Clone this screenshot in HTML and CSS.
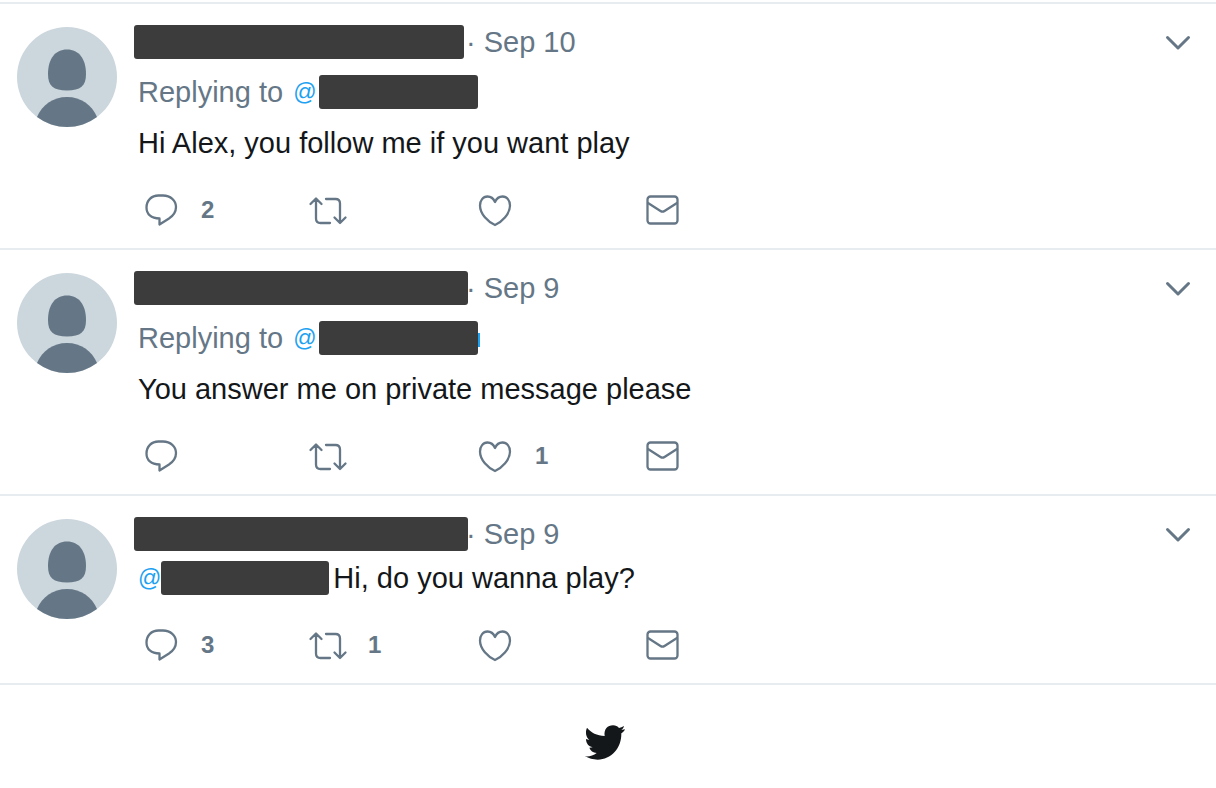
FILE: index.html
```html
<!DOCTYPE html>
<html lang="en">
<head>
    <meta charset="UTF-8">
    <meta name="viewport" content="width=device-width, initial-scale=1.0">
    <title>Replies</title>
    <link rel="stylesheet" href="styles.css">
</head>
<body>
    <!-- Shared icon shapes -->
    <svg class="sprite" aria-hidden="true">
        <symbol id="avatar" viewBox="0 0 100 100">
            <circle cx="50" cy="50" r="50" fill="#ccd6dd"/>
            <path d="M50 22.500C62 22.500 69 32 69 47C69 59 63.500 63.500 50 63.500C36.500 63.500 31 59 31 47C31 32 38 22.500 50 22.500Z" fill="#657786"/>
            <path d="M20 90C25 78 36 70 50 70C64 70 75 78 80 90A50 50 0 0 1 20 90Z" fill="#657786"/>
        </symbol>
        <symbol id="reply" viewBox="0 0 40 40">
            <path d="M17.500 5.500H22C29.500 5.500 35 10.500 35 17C35 22 32.500 25.500 28 28.500L18.500 34.500V28.500C10 28.500 5.500 24 5.500 17.500C5.500 10.500 10.500 5.500 17.500 5.500Z"/>
        </symbol>
        <symbol id="retweet" viewBox="0 0 40 40">
            <path d="M2.500 14L8 8.500L13.500 14M8 9V28.500C8 31.500 9.500 33 12.500 33H22M18 9H27.500C30.500 9 32 10.500 32 13.500V32.500M26.500 27.500L32 33L37.500 27.500"/>
        </symbol>
        <symbol id="like" viewBox="0 0 40 40">
            <path d="M20 12C18.500 8.500 15.500 6.500 12.500 6.500C8 6.500 5 10.500 5 15.500C5 24 13 32 20 35C27 32 35 24 35 15.500C35 10.500 32 6.500 27.500 6.500C24.500 6.500 21.500 8.500 20 12Z"/>
        </symbol>
        <symbol id="message" viewBox="0 0 40 40">
            <rect x="5.500" y="6.500" width="30" height="27" rx="3"/>
            <path d="M6 13L18.500 21C20 22 21 22 22.500 21L35 13"/>
        </symbol>
        <symbol id="caret" viewBox="0 0 28 28">
            <path d="M3.500 8.500L14 19L24.500 8.500"/>
        </symbol>
    </svg>

    <main class="stream">
        <article class="tweet">
            <svg class="avatar" role="img" aria-label="Profile picture"><use href="#avatar"/></svg>
            <div class="content">
                <header class="tweet-header">
                    <a class="account" href="#"><span class="redacted name-short"></span></a>
                    <a class="time" href="#">· Sep 10</a>
                    <button class="more" type="button" aria-label="More"><svg class="caret"><use href="#caret"/></svg></button>
                </header>
                <p class="replying">Replying to <a class="mention" href="#"><span class="at">@</span><span class="redacted handle"></span></a></p>
                <p class="tweet-text">Hi Alex, you follow me if you want play</p>
                <div class="actions">
                    <button class="action" type="button" aria-label="Reply"><svg class="icon"><use href="#reply"/></svg><span class="count">2</span></button>
                    <button class="action" type="button" aria-label="Retweet"><svg class="icon"><use href="#retweet"/></svg></button>
                    <button class="action" type="button" aria-label="Like"><svg class="icon"><use href="#like"/></svg></button>
                    <button class="action" type="button" aria-label="Direct message"><svg class="icon"><use href="#message"/></svg></button>
                </div>
            </div>
        </article>

        <article class="tweet">
            <svg class="avatar" role="img" aria-label="Profile picture"><use href="#avatar"/></svg>
            <div class="content">
                <header class="tweet-header">
                    <a class="account" href="#"><span class="redacted name"></span></a>
                    <a class="time" href="#">· Sep 9</a>
                    <button class="more" type="button" aria-label="More"><svg class="caret"><use href="#caret"/></svg></button>
                </header>
                <p class="replying">Replying to <a class="mention" href="#"><span class="at">@</span><span class="redacted handle handle-long"></span></a></p>
                <p class="tweet-text">You answer me on private message please</p>
                <div class="actions">
                    <button class="action" type="button" aria-label="Reply"><svg class="icon"><use href="#reply"/></svg></button>
                    <button class="action" type="button" aria-label="Retweet"><svg class="icon"><use href="#retweet"/></svg></button>
                    <button class="action" type="button" aria-label="Like"><svg class="icon"><use href="#like"/></svg><span class="count">1</span></button>
                    <button class="action" type="button" aria-label="Direct message"><svg class="icon"><use href="#message"/></svg></button>
                </div>
            </div>
        </article>

        <article class="tweet">
            <svg class="avatar" role="img" aria-label="Profile picture"><use href="#avatar"/></svg>
            <div class="content">
                <header class="tweet-header compact">
                    <a class="account" href="#"><span class="redacted name"></span></a>
                    <a class="time" href="#">· Sep 9</a>
                    <button class="more" type="button" aria-label="More"><svg class="caret"><use href="#caret"/></svg></button>
                </header>
                <p class="tweet-text"><a class="mention" href="#"><span class="at">@</span><span class="redacted handle-inline"></span></a>Hi, do you wanna play?</p>
                <div class="actions">
                    <button class="action" type="button" aria-label="Reply"><svg class="icon"><use href="#reply"/></svg><span class="count">3</span></button>
                    <button class="action" type="button" aria-label="Retweet"><svg class="icon"><use href="#retweet"/></svg><span class="count">1</span></button>
                    <button class="action" type="button" aria-label="Like"><svg class="icon"><use href="#like"/></svg></button>
                    <button class="action" type="button" aria-label="Direct message"><svg class="icon"><use href="#message"/></svg></button>
                </div>
            </div>
        </article>
    </main>

    <footer class="stream-footer">
        <svg class="bird" viewBox="0 0 120 105" role="img" aria-label="Twitter">
            <path d="M6 8C18 23 36 32 59 33C56 13 68 1 84 1C92 1 98 4 102 9C107 8 112 6 117 3C116 8 113 12 109 15L120 13C118 18 114 22 109 25C110 70 78 104 38 104C24 104 11 100 0 94C14 95 25 92 35 84C24 83 16 77 13 68L23 67C11 64 3 55 3 42L13 45C3 36 0 21 6 8Z"/>
        </svg>
    </footer>
</body>
</html>
```
FILE: styles.css
```css
* {
    box-sizing: border-box;
}

body {
    margin: 0;
    padding-top: 2px;
    background-color: #ffffff;
    color: #14171a;
    font-family: "Liberation Sans", Arial, sans-serif;
    font-size: 29px;
    line-height: 34px;
}

a {
    color: inherit;
    text-decoration: none;
}

p {
    margin: 0;
}

button {
    padding: 0;
    border: none;
    background: none;
    color: #657786;
    font-family: inherit;
    cursor: pointer;
}

.sprite {
    display: none;
}

.tweet {
    display: flex;
    align-items: flex-start;
    gap: 17px;
    padding: 21px 24px 18px 17px;
    border-top: 2px solid #e6ecf0;
}

.avatar {
    flex: none;
    width: 100px;
    height: 100px;
    margin-top: 2px;
}

.content {
    flex: 1;
    min-width: 0;
}

.tweet-header {
    display: flex;
    margin-bottom: 16px;
    color: #657786;
}

.tweet-header.compact {
    margin-bottom: 10px;
}

.account {
    display: flex;
    width: 332px;
}

/* Blocked-out names */
.redacted {
    display: inline-block;
    flex: none;
    height: 34px;
    border-radius: 3px;
    background-color: #3c3c3c;
    vertical-align: top;
}

.name {
    width: 334px;
}

.name-short {
    width: 330px;
}

.handle {
    position: relative;
    width: 159px;
}

/* Edge of the last letter showing past the block */
.handle-long::after {
    content: "";
    position: absolute;
    top: 12px;
    left: 100%;
    width: 2px;
    height: 14px;
    background-color: #1da1f2;
}

.handle-inline {
    width: 168px;
    margin-right: 4px;
}

.replying,
.tweet-text {
    padding-left: 4px;
}

.replying {
    margin-bottom: 17px;
    color: #657786;
}

.mention {
    color: #1da1f2;
}

.at {
    font-size: 23px;
    vertical-align: 2px;
    line-height: 22px;
}

.replying .at {
    padding: 0 2px;
}

.more {
    width: 28px;
    height: 34px;
    margin-left: auto;
}

.caret {
    display: block;
    width: 28px;
    height: 28px;
    margin: 4px 0;
    fill: none;
    stroke: #657786;
    stroke-width: 3;
    stroke-linecap: round;
    stroke-linejoin: round;
}

.actions {
    display: flex;
    margin-top: 30px;
    padding-left: 7px;
}

.action {
    display: flex;
    align-items: center;
    gap: 20px;
    width: 167px;
    height: 40px;
}

.icon {
    width: 40px;
    height: 40px;
    fill: none;
    stroke: #657786;
    stroke-width: 2.3;
    stroke-linecap: round;
    stroke-linejoin: round;
}

.count {
    font-size: 24px;
    font-weight: bold;
}

.stream-footer {
    display: flex;
    justify-content: center;
    padding: 40px 6px 28px 0;
    border-top: 2px solid #e6ecf0;
}

.bird {
    width: 40px;
    height: 35px;
    fill: #14171a;
}
```
